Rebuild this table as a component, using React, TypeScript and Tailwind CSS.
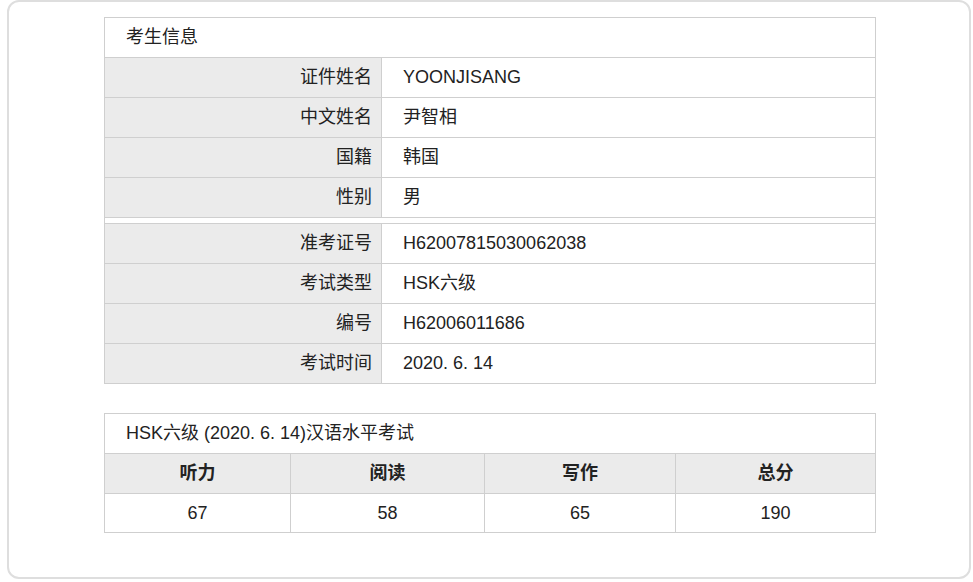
import React from "react";

const font = { fontFamily: '"Liberation Sans", Arial, "Noto Sans CJK SC", sans-serif' };

const personal = [
  ["证件姓名", "YOONJISANG"],
  ["中文姓名", "尹智相"],
  ["国籍", "韩国"],
  ["性别", "男"],
];

const exam = [
  ["准考证号", "H62007815030062038"],
  ["考试类型", "HSK六级"],
  ["编号", "H62006011686"],
  ["考试时间", "2020. 6. 14"],
];

const Row = ({ label, value }: { label: string; value: string }) => (
  <div className="flex border-t border-[#cfcfcf] h-[40px]">
    <div className="w-[277px] bg-[#ebebeb] border-r border-[#cfcfcf] flex items-center justify-end pr-[9px]">
      {label}
    </div>
    <div className="flex-1 flex items-center pl-[21px]">{value}</div>
  </div>
);

const scores = [
  { head: "听力", val: "67", w: "w-[185px]" },
  { head: "阅读", val: "58", w: "w-[194px] border-l border-[#cfcfcf]" },
  { head: "写作", val: "65", w: "w-[191px] border-l border-[#cfcfcf]" },
  { head: "总分", val: "190", w: "w-[200px] border-l border-[#cfcfcf]" },
];

export default function App() {
  return (
    <div className="w-[973px] h-[582px] bg-white pl-[7px] text-[18px] text-[#222]" style={font}>
      <div className="w-[964px] h-[579px] border-2 border-[#dedede] rounded-[12px] pl-[95px] pt-[15px]">
        <div className="w-[772px] border border-[#cfcfcf]">
          <div className="h-[39px] flex items-center pl-[21px]">考生信息</div>
          {personal.map(([l, v]) => (
            <Row key={l} label={l} value={v} />
          ))}
          <div className="h-[6px] border-t border-[#cfcfcf]" />
          <div className="border-t border-[#cfcfcf]">
            {exam.map(([l, v], i) => (
              <div key={l} className={i === 0 ? "-mt-px" : ""}>
                <Row label={l} value={v} />
              </div>
            ))}
          </div>
        </div>

        <div className="w-[772px] border border-[#cfcfcf] mt-[29px]">
          <div className="h-[39px] flex items-center pl-[21px]">HSK六级 (2020. 6. 14)汉语水平考试</div>
          <div className="flex border-t border-[#cfcfcf] bg-[#ebebeb] h-[40px] font-bold">
            {scores.map((s) => (
              <div key={s.head} className={`${s.w} flex items-center justify-center`}>
                {s.head}
              </div>
            ))}
          </div>
          <div className="flex border-t border-[#cfcfcf] h-[39px]">
            {scores.map((s) => (
              <div key={s.head} className={`${s.w} flex items-center justify-center`}>
                {s.val}
              </div>
            ))}
          </div>
        </div>
      </div>
    </div>
  );
}
